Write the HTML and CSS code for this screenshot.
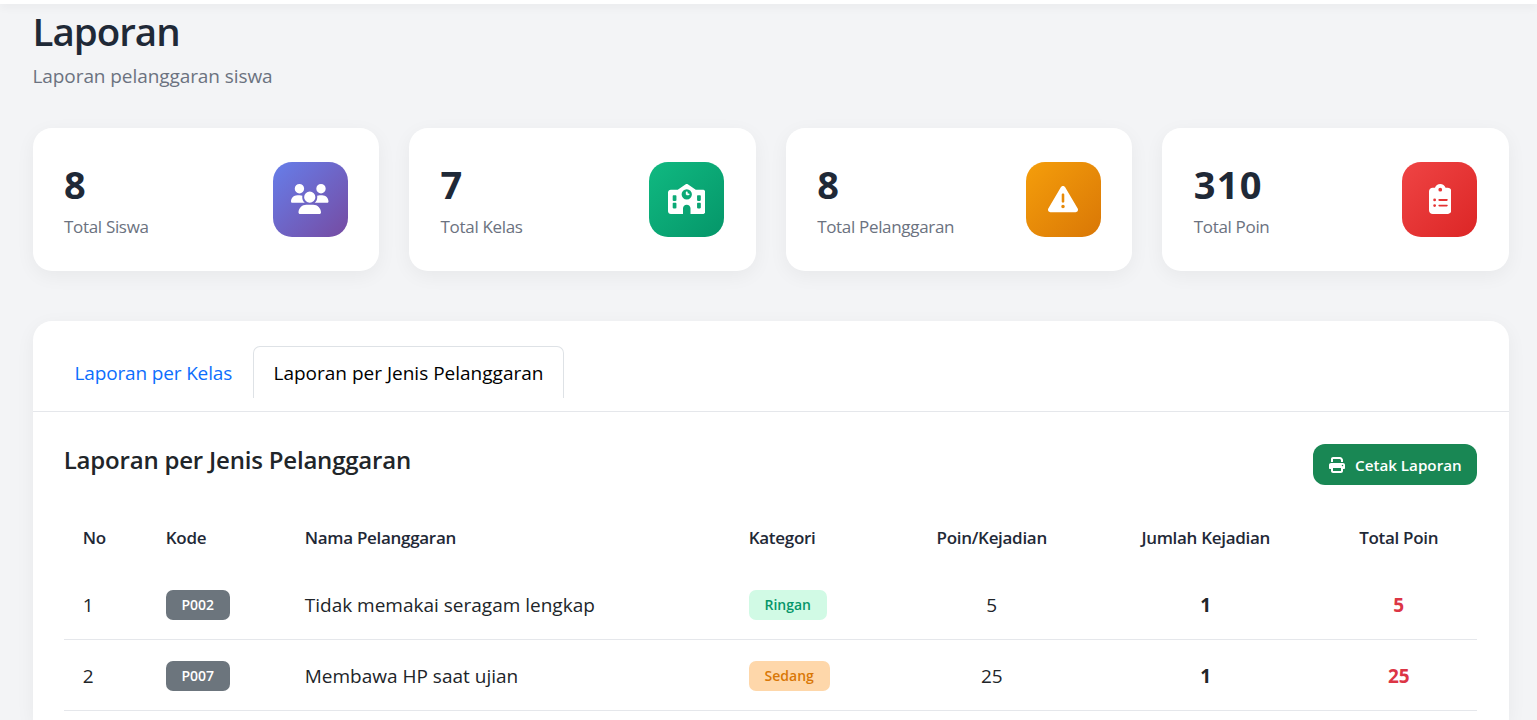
FILE: index.html
```html
<!DOCTYPE html>
<html lang="id">
<head>
    <meta charset="UTF-8">
    <meta name="viewport" content="width=device-width, initial-scale=1.0">
    <title>Laporan</title>
    <link rel="stylesheet" href="styles.css">
</head>
<body>
    <div class="topbar"></div>
    <main class="content">
        <div class="page-header">
            <h1>Laporan</h1>
            <p>Laporan pelanggaran siswa</p>
        </div>

        <!-- Statistik -->
        <div class="stats">
            <div class="stat-card">
                <div class="stat-info">
                    <h3>8</h3>
                    <p>Total Siswa</p>
                </div>
                <div class="stat-icon icon-siswa">
                    <svg viewBox="0 0 640 512"><path d="M144 0a80 80 0 1 1 0 160A80 80 0 1 1 144 0zM512 0a80 80 0 1 1 0 160A80 80 0 1 1 512 0zM0 298.7C0 239.8 47.8 192 106.7 192h42.7c15.9 0 31 3.5 44.6 9.7c-1.3 7.2-1.9 14.7-1.9 22.3c0 38.2 16.8 72.5 43.3 96c-.2 0-.4 0-.7 0H21.3C9.6 320 0 310.4 0 298.7zM405.3 320c-.2 0-.4 0-.7 0c26.6-23.5 43.3-57.8 43.3-96c0-7.6-.7-15-1.9-22.3c13.6-6.3 28.7-9.7 44.6-9.7h42.7C592.2 192 640 239.8 640 298.7c0 11.8-9.6 21.3-21.3 21.3H405.3zM224 224a96 96 0 1 1 192 0 96 96 0 1 1 -192 0zM128 485.3C128 411.7 187.7 352 261.3 352H378.7C452.3 352 512 411.7 512 485.3c0 14.7-11.9 26.7-26.7 26.7H154.7c-14.7 0-26.7-11.9-26.7-26.7z"/></svg>
                </div>
            </div>
            <div class="stat-card">
                <div class="stat-info">
                    <h3>7</h3>
                    <p>Total Kelas</p>
                </div>
                <div class="stat-icon icon-kelas">
                    <svg viewBox="0 0 640 512"><path d="M337.8 5.4C327-1.8 313-1.8 302.2 5.4L166.3 96H48C21.5 96 0 117.5 0 144V464c0 26.5 21.5 48 48 48H256V416c0-35.3 28.7-64 64-64s64 28.7 64 64v96H592c26.5 0 48-21.5 48-48V144c0-26.5-21.5-48-48-48H473.7L337.8 5.4zM96 192h32c8.8 0 16 7.2 16 16v64c0 8.8-7.2 16-16 16H96c-8.8 0-16-7.2-16-16V208c0-8.8 7.2-16 16-16zm400 16c0-8.8 7.2-16 16-16h32c8.8 0 16 7.2 16 16v64c0 8.8-7.2 16-16 16H512c-8.8 0-16-7.2-16-16V208zM96 320h32c8.8 0 16 7.2 16 16v64c0 8.8-7.2 16-16 16H96c-8.8 0-16-7.2-16-16V336c0-8.8 7.2-16 16-16zm400 16c0-8.8 7.2-16 16-16h32c8.8 0 16 7.2 16 16v64c0 8.8-7.2 16-16 16H512c-8.8 0-16-7.2-16-16V336zM232 176a88 88 0 1 1 176 0 88 88 0 1 1 -176 0zm88-48c-8.8 0-16 7.2-16 16v32c0 8.8 7.2 16 16 16h32c8.8 0 16-7.2 16-16s-7.2-16-16-16H336V144c0-8.8-7.2-16-16-16z"/></svg>
                </div>
            </div>
            <div class="stat-card">
                <div class="stat-info">
                    <h3>8</h3>
                    <p>Total Pelanggaran</p>
                </div>
                <div class="stat-icon icon-pelanggaran">
                    <svg viewBox="0 0 512 512"><path d="M256 32c14.2 0 27.3 7.5 34.5 19.8l216 368c7.3 12.4 7.3 27.7 .2 40.1S486.3 480 472 480H40c-14.3 0-27.6-7.7-34.7-20.1s-7-27.8 .2-40.1l216-368C228.7 39.5 241.8 32 256 32zm0 128c-13 0-22 9-22 20V300c0 11 9 20 22 20s22-9 22-20V180c0-11-9-20-22-20zm30 224a30 30 0 1 0 -60 0 30 30 0 1 0 60 0z"/></svg>
                </div>
            </div>
            <div class="stat-card">
                <div class="stat-info">
                    <h3>310</h3>
                    <p>Total Poin</p>
                </div>
                <div class="stat-icon icon-poin">
                    <svg viewBox="0 0 384 512"><path d="M192 0c-41.8 0-77.4 26.7-90.5 64H64C28.7 64 0 92.7 0 128V448c0 35.3 28.7 64 64 64H320c35.3 0 64-28.7 64-64V128c0-35.3-28.7-64-64-64H282.5C269.4 26.7 233.8 0 192 0zm0 64a32 32 0 1 1 0 64 32 32 0 1 1 0-64zM72 272a24 24 0 1 1 48 0 24 24 0 1 1 -48 0zm104-16H304c8.8 0 16 7.2 16 16s-7.2 16-16 16H176c-8.8 0-16-7.2-16-16s7.2-16 16-16zM72 368a24 24 0 1 1 48 0 24 24 0 1 1 -48 0zm88 0c0-8.8 7.2-16 16-16H304c8.8 0 16 7.2 16 16s-7.2 16-16 16H176c-8.8 0-16-7.2-16-16z"/></svg>
                </div>
            </div>
        </div>

        <!-- Laporan -->
        <div class="card">
            <div class="card-header">
                <a class="tab tab-kelas" href="#">Laporan per Kelas</a>
                <a class="tab tab-jenis active" href="#">Laporan per Jenis Pelanggaran</a>
            </div>
            <div class="card-body">
                <div class="toolbar">
                    <h5>Laporan per Jenis Pelanggaran</h5>
                    <button type="button" class="btn-print">
                        <svg viewBox="0 0 512 512"><path d="M128 0C92.7 0 64 28.7 64 64v96h64V64H354.7L384 93.3V160h64V93.3c0-17-6.7-33.3-18.7-45.3L400 18.7C388 6.7 371.7 0 354.7 0H128zM384 352v32 64H128V384 368 352H384zm64 32h32c17.7 0 32-14.3 32-32V256c0-35.3-28.7-64-64-64H64c-35.3 0-64 28.7-64 64v96c0 17.7 14.3 32 32 32H64v64c0 35.3 28.7 64 64 64H384c35.3 0 64-28.7 64-64V384zM432 248a24 24 0 1 1 0 48 24 24 0 1 1 0-48z"/></svg>
                        <span>Cetak Laporan</span>
                    </button>
                </div>
                <table class="table">
                    <colgroup>
                        <col class="col-no">
                        <col class="col-kode">
                        <col class="col-nama">
                        <col class="col-kategori">
                        <col class="col-poin">
                        <col class="col-jumlah">
                        <col class="col-total">
                    </colgroup>
                    <thead>
                        <tr>
                            <th>No</th>
                            <th>Kode</th>
                            <th>Nama Pelanggaran</th>
                            <th>Kategori</th>
                            <th class="center">Poin/Kejadian</th>
                            <th class="center">Jumlah Kejadian</th>
                            <th class="center">Total Poin</th>
                        </tr>
                    </thead>
                    <tbody>
                        <tr>
                            <td>1</td>
                            <td><span class="badge badge-kode">P002</span></td>
                            <td>Tidak memakai seragam lengkap</td>
                            <td><span class="badge badge-ringan">Ringan</span></td>
                            <td class="center">5</td>
                            <td class="center"><strong>1</strong></td>
                            <td class="center"><strong class="danger">5</strong></td>
                        </tr>
                        <tr>
                            <td>2</td>
                            <td><span class="badge badge-kode">P007</span></td>
                            <td>Membawa HP saat ujian</td>
                            <td><span class="badge badge-sedang">Sedang</span></td>
                            <td class="center">25</td>
                            <td class="center"><strong>1</strong></td>
                            <td class="center"><strong class="danger">25</strong></td>
                        </tr>
                    </tbody>
                </table>
            </div>
        </div>
    </main>
</body>
</html>
```
FILE: styles.css
```css
* {
    box-sizing: border-box;
}

body {
    margin: 0;
    background-color: #f3f4f6;
    font-family: "Open Sans", "Noto Sans", sans-serif;
    font-size: 19px;
    line-height: 30px;
    color: #212529;
}

h1, h3, h5, p {
    margin: 0;
}

.topbar {
    height: 4px;
    background-color: white;
    box-shadow: 0 2px 10px rgba(0, 0, 0, 0.08);
}

.content {
    padding: 0 28.25px 0 32.5px;
}

.page-header {
    height: 124px;
    padding-top: 3px;
}

.page-header h1 {
    font-size: 38.5px;
    line-height: 48px;
    font-weight: 600;
    letter-spacing: -1px;
    color: #1f2937;
}

.page-header p {
    margin-top: 6px;
    letter-spacing: -0.08px;
    color: #6b7280;
}

.stats {
    display: grid;
    grid-template-columns: repeat(4, 1fr);
    gap: 30px;
    margin-bottom: 50px;
}

.stat-card {
    height: 143px;
    padding: 0 31.5px;
    display: flex;
    align-items: center;
    justify-content: space-between;
    background-color: white;
    border-radius: 19px;
    box-shadow: 0 5px 19px rgba(0, 0, 0, 0.05);
}

.stat-info h3 {
    padding-top: 2px;
    font-size: 38px;
    line-height: 48px;
    font-weight: 700;
    letter-spacing: 1.3px;
    color: #1f2937;
}

.stat-info p {
    margin-top: 4px;
    font-size: 17px;
    letter-spacing: -0.32px;
    color: #6b7280;
}

.stat-icon {
    width: 75px;
    height: 75px;
    display: flex;
    align-items: center;
    justify-content: center;
    padding-bottom: 2px;
    border-radius: 19px;
}

.stat-icon svg {
    height: 30px;
    fill: white;
}

.icon-siswa {
    background: linear-gradient(135deg, #667eea, #764ba2);
}

.icon-kelas {
    background: linear-gradient(135deg, #10b981, #059669);
}

.icon-pelanggaran {
    background: linear-gradient(135deg, #f59e0b, #d97706);
}

.icon-poin {
    background: linear-gradient(135deg, #ef4444, #dc2626);
}

.card {
    height: 399px;
    background-color: white;
    border-radius: 19px 19px 0 0;
    box-shadow: 0 5px 19px rgba(0, 0, 0, 0.05);
}

.card-header {
    height: 91px;
    display: flex;
    align-items: flex-start;
    padding: 25px 21px 0;
    border-bottom: 1px solid #e5e7eb;
}

.tab {
    height: 52px;
    padding: 11px 20px;
    border: 1px solid transparent;
    border-bottom: none;
    border-radius: 7px 7px 0 0;
    color: #0d6efd;
    text-decoration: none;
    white-space: nowrap;
}

.tab-kelas {
    width: 199px;
    letter-spacing: -0.15px;
}

.tab-jenis {
    width: 311px;
}

.tab.active {
    color: #000;
    border-color: #dee2e6;
}

.card-body {
    padding: 32px 31.75px 0 31.25px;
}

.toolbar {
    height: 63px;
    display: flex;
    justify-content: space-between;
    align-items: flex-start;
}

.toolbar h5 {
    font-size: 24px;
    line-height: 32px;
    font-weight: 600;
    letter-spacing: -0.2px;
}

.btn-print {
    width: 164px;
    height: 41px;
    display: flex;
    align-items: center;
    gap: 10px;
    padding: 0 16px;
    border: none;
    border-radius: 12px;
    background-color: #198754;
    color: white;
    font-family: inherit;
    font-size: 15.2px;
    font-weight: 600;
    white-space: nowrap;
}

.btn-print svg {
    flex: none;
    width: 16px;
    height: 16px;
    fill: white;
}

.table {
    width: 1413px;
    table-layout: fixed;
    border-collapse: separate;
    border-spacing: 0;
}

.col-no { width: 83px; }
.col-kode { width: 139px; }
.col-nama { width: 444px; }
.col-kategori { width: 163px; }
.col-poin { width: 198px; }
.col-jumlah { width: 230px; }
.col-total { width: 156px; }

.table th {
    height: 62px;
    padding: 0 19px;
    font-size: 17px;
    font-weight: 600;
    letter-spacing: -0.3px;
    text-align: left;
    white-space: nowrap;
    color: #1f2937;
}

.table td {
    height: 71px;
    padding: 1px 19px 0;
    border-bottom: 1px solid #e5e7eb;
    white-space: nowrap;
}

.table .center {
    text-align: center;
}

.danger {
    color: #dc3545;
}

.badge {
    display: block;
    height: 30px;
    border-radius: 7px;
    font-size: 14px;
    font-weight: 600;
    text-align: center;
}

.badge-kode {
    width: 64px;
    background-color: #6c757d;
    color: white;
}

.badge-ringan {
    width: 78px;
    background-color: #d1fae5;
    color: #059669;
}

.badge-sedang {
    width: 81px;
    background-color: #fed7aa;
    color: #d97706;
}
```
